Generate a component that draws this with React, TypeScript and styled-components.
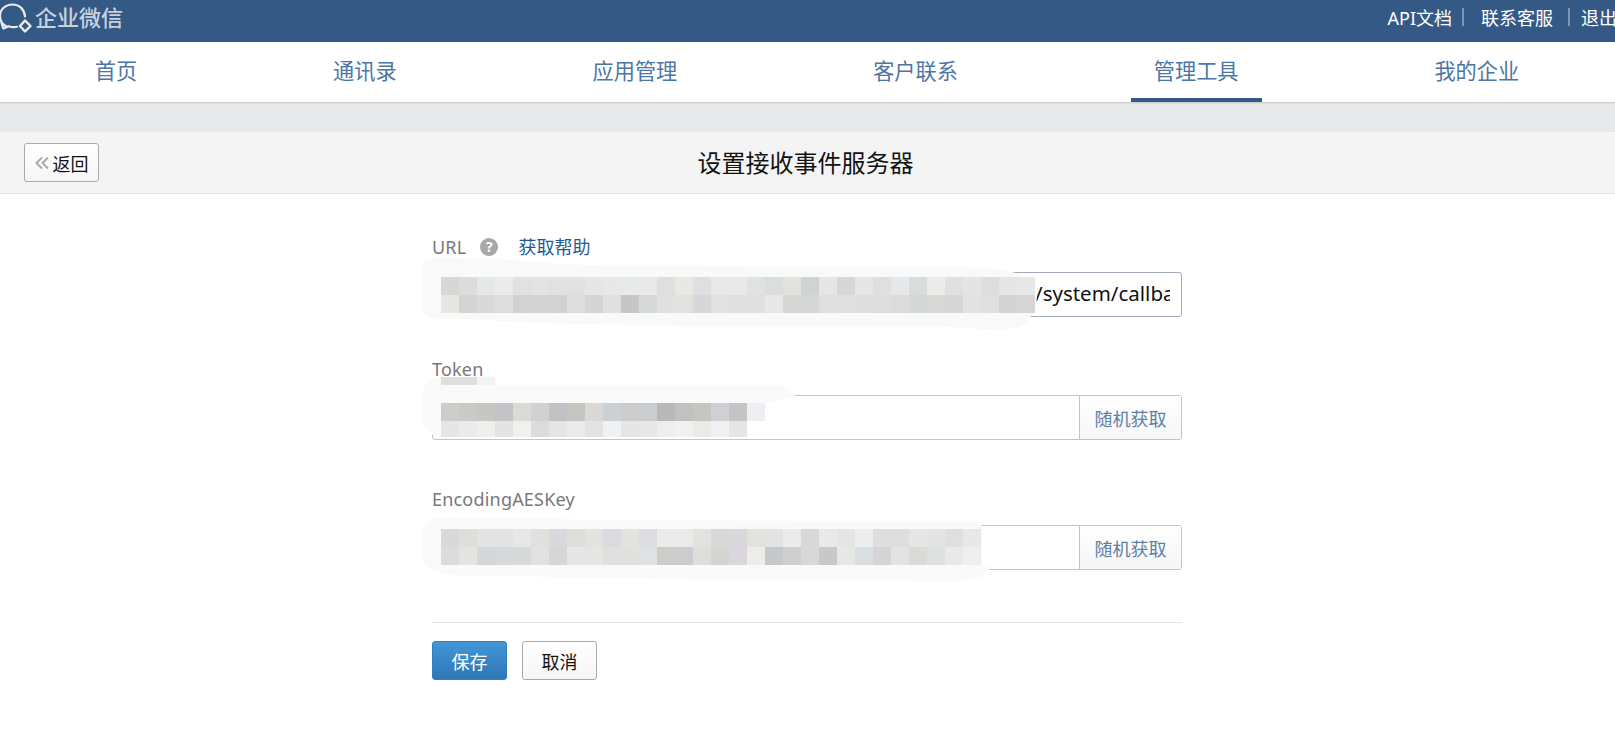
import React from "react";
import styled, { createGlobalStyle } from "styled-components";

const FONT = `"Noto Sans", "Noto Sans CJK SC", "Liberation Sans", sans-serif`;

const Global = createGlobalStyle`
  html, body { margin: 0; padding: 0; background: #fff; }
  body { font-family: ${FONT}; overflow: hidden; }
`;

const Page = styled.div`
  position: relative;
  width: 1615px;
  height: 752px;
  overflow: hidden;
  background: #fff;
`;

const TopBar = styled.header`
  display: flex;
  align-items: center;
  justify-content: space-between;
  height: 42px;
  background: #345985;
  color: #fff;
`;

const Logo = styled.div`
  display: flex;
  align-items: center;
  gap: 3px;
  height: 34px;
  margin-top: -8px;
  color: #c8d2de;
  font-size: 22px;
  line-height: 34px;
  font-weight: 500;
`;

const LogoMark = styled.svg`
  width: 32px;
  height: 34px;
  flex: none;
`;

const TopLinks = styled.nav`
  display: flex;
  align-items: center;
  height: 36px;
  margin-top: -8px;
  margin-right: -2px;
  font-size: 18px;
  white-space: nowrap;
`;

const TopLink = styled.span`
  color: #fff;
`;

const TopSep = styled.i<{ $before: number; $after: number }>`
  display: block;
  width: 2px;
  height: 18px;
  margin: 0 ${(p) => p.$after}px 0 ${(p) => p.$before}px;
  background: #7f95b0;
`;

const NavBar = styled.nav`
  position: relative;
  display: flex;
  gap: 149.7px;
  height: 60px;
  padding-left: 71.7px;
  background: #fff;
  box-shadow: 0 1px 2px rgba(0, 0, 0, 0.16);
`;

const NavItem = styled.a<{ $active?: boolean }>`
  box-sizing: border-box;
  display: block;
  height: 60px;
  padding: 0 23.1px;
  color: #4d76a5;
  font-size: 21.2px;
  line-height: 58px;
  border-bottom: 4px solid ${(p) => (p.$active ? "#345985" : "transparent")};
`;

const Band = styled.div`
  height: 30px;
  background: #e8e9eb;
`;

const TitleBar = styled.div`
  box-sizing: border-box;
  display: grid;
  grid-template-columns: 1fr auto 1fr;
  align-items: center;
  height: 62px;
  padding: 0 28px 0 24px;
  background: #f4f4f4;
  border-bottom: 1px solid #e2e2e2;
  border-radius: 0 3px 0 0;
`;

const BackButton = styled.button`
  box-sizing: border-box;
  display: flex;
  align-items: center;
  justify-content: center;
  gap: 4px;
  width: 75px;
  height: 39px;
  padding: 0;
  justify-self: start;
  color: #111;
  font: 18px ${FONT};
  background: linear-gradient(#ffffff, #f6f6f6);
  border: 1px solid #aaaaaa;
  border-radius: 3px;
`;

const BackIcon = styled.svg`
  width: 14px;
  height: 14px;
  flex: none;
`;

const Title = styled.h1`
  margin: 0;
  color: #111;
  font-size: 24px;
  line-height: 34px;
  font-weight: 400;
`;

const Form = styled.form`
  width: 750px;
  margin-left: 432px;
  padding-top: 42px;
`;

const Field = styled.div<{ $gap: number; $after: number }>`
  display: flex;
  flex-direction: column;
  gap: ${(p) => p.$gap}px;
  margin-bottom: ${(p) => p.$after}px;
`;

const LabelRow = styled.div`
  display: flex;
  align-items: flex-start;
  height: 24px;
  color: #787878;
  font-size: 18px;
  line-height: 22px;
  letter-spacing: 0.2px;
`;

const Help = styled.span`
  display: flex;
  align-items: center;
  justify-content: center;
  width: 18px;
  height: 18px;
  margin: 2px 20px 0 14px;
  border-radius: 50%;
  background: #a8a8a8;
  color: #fff;
  font-size: 14px;
  font-weight: 700;
  line-height: 18px;
`;

const HelpLink = styled.a`
  color: #1f5a98;
  letter-spacing: 0;
`;

const InputBox = styled.div<{ $strong?: boolean }>`
  box-sizing: border-box;
  display: flex;
  height: 45px;
  background: #fff;
  border: 1px solid ${(p) => (p.$strong ? "#a0aab8" : "#c0c5cc")};
  border-radius: 3px;
  overflow: hidden;
`;

const InputValue = styled.div<{ $offset?: number }>`
  flex: 1;
  min-width: 0;
  margin-right: 11px;
  padding-left: ${(p) => p.$offset ?? 12}px;
  overflow: hidden;
  color: #111;
  font-size: 20.5px;
  line-height: 41px;
  white-space: nowrap;
`;

const RandomButton = styled.button`
  box-sizing: border-box;
  flex: none;
  width: 102px;
  padding: 0;
  color: #5f7fa6;
  font: 18px ${FONT};
  background: linear-gradient(#ffffff, #f5f6f7);
  border: 0;
  border-left: 1px solid #c0c5cc;
`;

const Divider = styled.hr`
  height: 1px;
  margin: 0 0 18px;
  border: 0;
  background: #e4e5e7;
`;

const Actions = styled.div`
  display: flex;
  gap: 15px;
`;

const ActionButton = styled.button<{ $primary?: boolean }>`
  box-sizing: border-box;
  width: 75px;
  height: 39px;
  padding: 0;
  font: 18px ${FONT};
  border-radius: 3px;
  color: ${(p) => (p.$primary ? "#fff" : "#111")};
  border: 1px solid ${(p) => (p.$primary ? "#2f7fc2" : "#aaaaaa")};
  background: ${(p) =>
    p.$primary
      ? "linear-gradient(#4495d8, #2e77b5)"
      : "linear-gradient(#ffffff, #f6f6f6)"};
`;

const CensorLayer = styled.svg`
  position: absolute;
  left: 0;
  top: 0;
  pointer-events: none;
`;

const NAV = ["首页", "通讯录", "应用管理", "客户联系", "管理工具", "我的企业"];

const cols = (s: string) => s.split(" ").map((c) => `#${c}`);

const MOSAICS: { x: number; y: number; h: number; colors: string[] }[] = [
  {
    x: 441,
    y: 277,
    h: 18,
    colors: cols(
      "d8d7d6 dcdcdd e6e7e7 ecebe9 e0e1e3 e3e3e4 e2e1e2 e0e2e2 e6e6e6 e8e8e8 e8e9e9 e9e9e9 dfdfe1 e9e8e3 dedfe1 e9e9e9 e8e9e8 e0e2e2 dcdddd e2e1de cfd3d4 e6e6e4 d6d7d6 e6e6e6 dfdfdf e6e7ea dadcdc ebebe9 e0e0e0 e4e4e4 dcdde1 e6e6e6 e8e8e8"
    ),
  },
  {
    x: 441,
    y: 295,
    h: 18,
    colors: cols(
      "e7e6e2 d3d5d2 d9d9d9 dcdddc d2d2d3 d3d3d3 d2d2d2 dcdddd d5d5d5 dfe0e2 c6c6c4 d7d8da e0dfe1 e2e1df d6d7da e1e1e2 dfe0e2 e0e0e2 e8e8e8 d6d6d4 d5d6d8 e0e0e1 e0dfdd e0dedc dddddc dbdbdb d5d8d9 d8d8d6 d5d8d7 e2e2e3 e0e0e1 d3d3d3 d8d6d5"
    ),
  },
  { x: 441, y: 377, h: 8, colors: cols("dfdfdf dfdfdf f2f3f3") },
  {
    x: 441,
    y: 403,
    h: 18,
    colors: cols(
      "cdcdc9 c9c9c6 c6c7c2 c4c4c8 dadad7 d0d2d2 c2c2c6 c5c5c2 dbd8d5 cad0d4 cdcccb cbced1 b8b8b8 c1c1c0 c7c5c1 cdd0d4 c5c3c4 eeeff2"
    ),
  },
  {
    x: 441,
    y: 421,
    h: 16,
    colors: cols(
      "e6e6e6 ebebeb efefed e4e4e5 f0f0ee dcdcdc e5e5e7 ebebeb e4e3e2 eff1f2 e5e5e5 e7e7e8 edefef f1f1f1 ebeae8 f0f0f0 e5e5e6"
    ),
  },
  {
    x: 441,
    y: 529,
    h: 18,
    colors: cols(
      "d9d9dc dfdeda e1e3e5 e1e3e4 e6e8e8 e1e0de d7d9dc dedddb e2e3de dadbde e2e3de dcdde0 ebebeb eaeaea e3e2df d8d8d8 dad8dd e3e2df e1e3e4 ebebeb d8d8d6 e8eaea e5e6e3 ecedef dfdedc dedee0 e4e7e6 e3e4e4 dfdfe0 e8e8e8"
    ),
  },
  {
    x: 441,
    y: 547,
    h: 18,
    colors: cols(
      "dcdcdc e4e4e0 d6d7da d7d8da d8d9d9 e1e1e1 d5d6d8 e6e6e6 e6e6e2 dfe0e2 e0e1dd dfe1e2 cdcdc8 cdcdd0 dfdeda d4d4d2 dbd6dc ecece8 c7c8ca cfcfcf d7d9d8 c8c8c8 e6e8e5 d9dfe0 d6d4d4 e4e3e4 dbdad7 dfe0e2 e9e9e7 efefef"
    ),
  },
];

const Censor = () => (
  <CensorLayer width="1615" height="752" viewBox="0 0 1615 752">
    <path
      d="M423 262Q426 258 440 258L500 259Q540 264 620 266L967 267Q1000 268 1020 274Q1037 282 1037 296Q1036 318 1020 326Q1012 331 985 329Q960 328 940 326L700 326Q560 324 520 322Q470 319 435 318Q423 317 423 310Z"
      fill="#f8f9f9"
    />
    <path
      d="M423 392Q424 378 440 377L495 376L496 385L785 385L795 396L765 403L747 421L747 437L438 437Q423 432 423 420Z"
      fill="#fafafa"
    />
    <path
      d="M423 530Q426 518 445 517L560 519Q640 521 975 521L982 526L982 565L993 565L985 574Q975 582 950 581L700 580Q520 576 470 576Q428 575 423 562Z"
      fill="#fafafa"
    />
    {MOSAICS.map((row) =>
      row.colors.map((c, i) => (
        <rect key={`${row.y}-${i}`} x={row.x + i * 18} y={row.y} width="18" height={row.h} fill={c} />
      ))
    )}
  </CensorLayer>
);

export default function App() {
  return (
    <Page>
      <Global />
      <TopBar>
        <Logo>
          <LogoMark viewBox="0 0 32 34" fill="none">
            <path
              d="M6.5 26.5C2 24 0 20 0 16 0 9.5 5.5 4.5 12.5 4.5 19.5 4.5 24.5 9.5 25 16.5"
              stroke="#e6ebf1"
              strokeWidth="2.2"
              strokeLinecap="round"
            />
            <path
              d="M1.5 23L3.5 28.5 8.5 26.2C11 27.2 14 27.5 17 26.8"
              stroke="#e6ebf1"
              strokeWidth="2.2"
              strokeLinecap="round"
              strokeLinejoin="round"
            />
            <path d="M25 20.5L30.5 26 25 31.5 20 26Z" stroke="#e8edf2" strokeWidth="2.4" strokeLinejoin="round" />
          </LogoMark>
          企业微信
        </Logo>
        <TopLinks>
          <TopLink>API文档</TopLink>
          <TopSep $before={10} $after={17} />
          <TopLink>联系客服</TopLink>
          <TopSep $before={15} $after={11} />
          <TopLink>退出</TopLink>
        </TopLinks>
      </TopBar>
      <NavBar>
        {NAV.map((n) => (
          <NavItem key={n} $active={n === "管理工具"}>
            {n}
          </NavItem>
        ))}
      </NavBar>
      <Band />
      <TitleBar>
        <BackButton type="button">
          <BackIcon viewBox="0 0 14 14" fill="none" stroke="#a9a9a9" strokeWidth="2">
            <path d="M7 1.5L1.5 7 7 12.5" />
            <path d="M13 1.5L7.5 7 13 12.5" />
          </BackIcon>
          返回
        </BackButton>
        <Title>设置接收事件服务器</Title>
      </TitleBar>
      <Form>
        <Field $gap={12} $after={41}>
          <LabelRow>
            URL
            <Help>?</Help>
            <HelpLink>获取帮助</HelpLink>
          </LabelRow>
          <InputBox $strong>
            <InputValue $offset={602}>/system/callback</InputValue>
          </InputBox>
        </Field>
        <Field $gap={13} $after={48}>
          <LabelRow>Token</LabelRow>
          <InputBox>
            <InputValue />
            <RandomButton type="button">随机获取</RandomButton>
          </InputBox>
        </Field>
        <Field $gap={13} $after={52}>
          <LabelRow>EncodingAESKey</LabelRow>
          <InputBox>
            <InputValue />
            <RandomButton type="button">随机获取</RandomButton>
          </InputBox>
        </Field>
        <Divider />
        <Actions>
          <ActionButton type="button" $primary>
            保存
          </ActionButton>
          <ActionButton type="button">取消</ActionButton>
        </Actions>
      </Form>
      <Censor />
    </Page>
  );
}
